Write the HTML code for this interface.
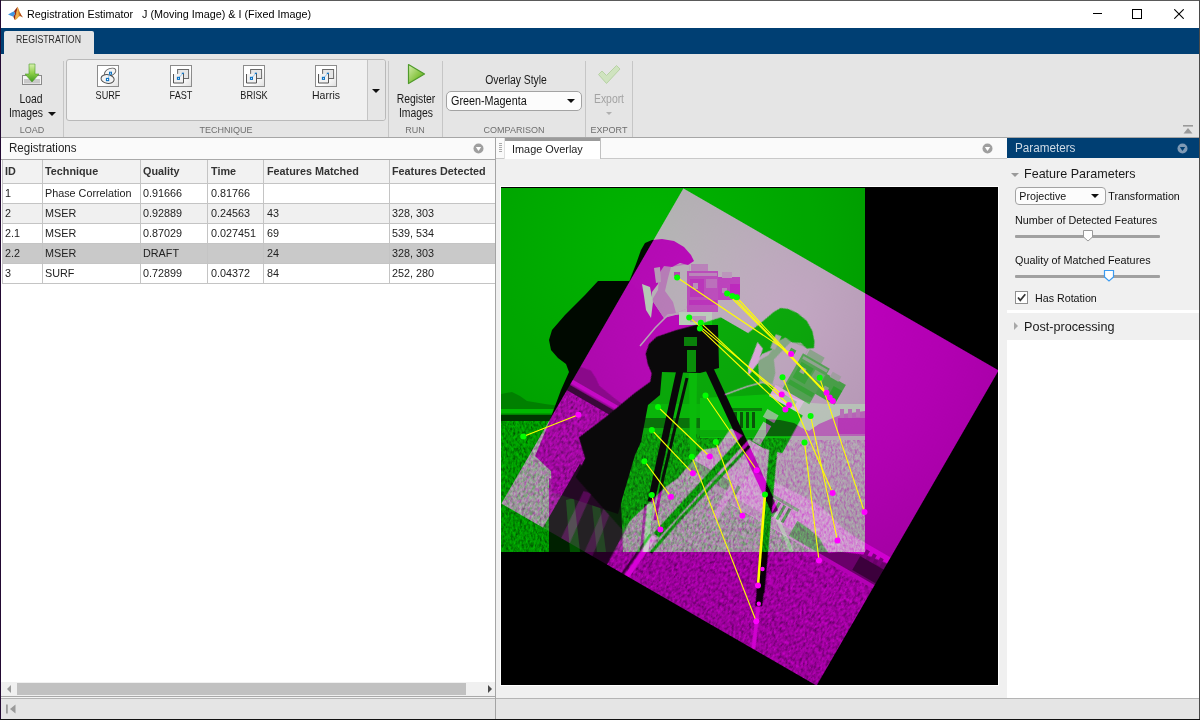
<!DOCTYPE html>
<html>
<head>
<meta charset="utf-8">
<title>Registration Estimator</title>
<style>
*{box-sizing:border-box;margin:0;padding:0}
html,body{width:1200px;height:720px;overflow:hidden;background:#fff}
body{font-family:"Liberation Sans",sans-serif;font-size:11px;color:#1a1a1a;position:relative}
.a{position:absolute}
.t{position:absolute;white-space:nowrap;line-height:1}
.c{transform:translateX(-50%)}
#blue{left:0;top:28px;width:1200px;height:26px;background:#003f73}
#tab{left:4px;top:31px;width:90px;height:24px;background:#e5e5e5;border-radius:2px 2px 0 0}
#strip{left:0;top:54px;width:1200px;height:83px;background:#e5e5e5}
#stripline{left:0;top:137px;width:1200px;height:1px;background:#a6a6a6}
.vsep{position:absolute;top:61px;width:1px;height:76px;background:#c6c6c6}
.sec{position:absolute;top:126px;font-size:9px;color:#6e6e6e;line-height:1;white-space:nowrap;transform:translateX(-50%)}
.lbl{position:absolute;font-size:12px;color:#1a1a1a;line-height:1;white-space:nowrap;transform:translateX(-50%) scaleX(0.865)}
#gal{left:66px;top:59px;width:320px;height:62px;background:#f0f0f0;border:1px solid #b9b9b9;border-radius:3px}
#galbtn{left:367px;top:60px;width:18px;height:60px;background:#e6e6e6;border-left:1px solid #c4c4c4;border-radius:0 3px 3px 0}
.ibox{position:absolute;top:65px;width:22px;height:22px;background:linear-gradient(135deg,#ffffff 55%,#e4e4e4);border:1px solid #a2a2a2}
.gl{position:absolute;top:90px;font-size:10.5px;color:#1a1a1a;line-height:1;white-space:nowrap;transform:translateX(-50%) scaleX(0.87)}
#dd{left:446px;top:91px;width:136px;height:20px;background:#fcfcfc;border:1px solid #a3a3a3;border-radius:5px}
.tri{position:absolute;width:0;height:0;border-left:4px solid transparent;border-right:4px solid transparent;border-top:4px solid #111}
.hline{position:absolute;height:1px;background:#c4c4c4}
.vline{position:absolute;width:1px;background:#c4c4c4}
.cell{position:absolute;font-size:10.8px;line-height:1;white-space:nowrap;color:#222}
.hd{font-weight:bold;color:#333;font-size:10.8px}
</style>
</head>
<body>
<!-- title bar -->
<div class="a" style="left:0;top:0;width:1200px;height:28px;background:#fff"></div>
<svg class="a" style="left:6px;top:4px" width="20" height="18" viewBox="6 4 20 18">
<path d="M8 14.6 L11.5 12.6 L14 11.3 L15.2 13.5 L13.4 16.8 L11 15.8 Z" fill="#3f95e0"/>
<path d="M14 11.3 L16.2 8.6 L17.6 6.8 L17 11 L15.8 15 L14.6 20 L13.4 16.8 L15.2 13.5 Z" fill="#8a2818"/>
<path d="M17.6 6.8 C18.6 8.6 19.8 13.2 23 17.6 C21.6 16.4 20.3 15.8 19 16.6 C17.6 17.8 16.4 20 14.6 20 C15.2 17 16.4 12 17.6 6.8 Z" fill="#d4862e"/>
<path d="M17.6 7.6 C18.2 10 18.4 13.5 19 16.6 C17.8 17.6 16.6 19.4 15.2 19.8 C16 16 16.8 12 17.6 7.6 Z" fill="#efb04a"/>
<path d="M19.6 12.2 C20.4 14.2 21.6 16 23 17.6 C21.8 16.6 20.8 16 19.8 16.1 Z" fill="#a8451c"/>
</svg>
<div class="t" id="title" style="left:26.6px;top:8px;font-size:11.6px;color:#000;transform-origin:0 50%;transform:scaleX(0.93)">Registration Estimator &nbsp; J (Moving Image) &amp; I (Fixed Image)</div>
<!-- window buttons -->
<div class="a" style="left:1093px;top:13px;width:9px;height:1px;background:#000"></div>
<div class="a" style="left:1132px;top:9px;width:10px;height:10px;border:1px solid #000"></div>
<svg class="a" style="left:1174px;top:9px" width="10" height="10" viewBox="0 0 10 10"><path d="M0.3 0.3 L9.7 9.7 M9.7 0.3 L0.3 9.7" stroke="#000" stroke-width="1.1" fill="none"/></svg>

<div id="blue" class="a"></div>
<div id="tab" class="a"></div>
<div class="t" id="tabtxt" style="left:16.3px;top:35.3px;font-size:10px;color:#2a2a2a;transform-origin:0 50%;transform:scaleX(0.875)">REGISTRATION</div>
<div id="strip" class="a"></div>
<div id="stripline" class="a"></div>

<!-- TOOLSTRIP -->
<div id="toolstrip">
<div class="vsep" style="left:63px"></div>
<div class="vsep" style="left:388px"></div>
<div class="vsep" style="left:442px"></div>
<div class="vsep" style="left:585px"></div>
<div class="vsep" style="left:632px"></div>
<!-- load -->
<svg class="a" style="left:20px;top:62px" width="24" height="24" viewBox="0 0 24 24">
<defs><linearGradient id="ga" x1="0" y1="0" x2="0" y2="1"><stop offset="0" stop-color="#d9f0b0"/><stop offset="0.5" stop-color="#8fd04a"/><stop offset="1" stop-color="#3e9a1e"/></linearGradient></defs>
<rect x="2.5" y="13.5" width="19" height="9" fill="#f4f4f4" stroke="#8a8a8a"/>
<rect x="4" y="17" width="16" height="4.5" fill="#c9c9c9"/>
<path d="M9 2 L15 2 L15 12 L19 12 L12 20 L5 12 L9 12 Z" fill="url(#ga)" stroke="#4b9a2a" stroke-width="0.6"/>
</svg>
<div class="lbl" style="left:31px;top:93px">Load</div>
<div class="lbl" style="left:26px;top:106.5px">Images</div>
<div class="tri" style="left:48px;top:112px"></div>
<div class="sec" style="left:32px">LOAD</div>
<!-- gallery -->
<div id="gal" class="a"></div>
<div id="galbtn" class="a"></div>
<div class="tri" style="left:372px;top:89px"></div>
<svg class="a" style="left:97px;top:65px" width="22" height="22" viewBox="0 0 22 22"><defs><linearGradient id="ib" x1="0" y1="0" x2="1" y2="1"><stop offset="0.6" stop-color="#fff"/><stop offset="1" stop-color="#dedede"/></linearGradient></defs>
<rect x="0.5" y="0.5" width="21" height="21" fill="url(#ib)" stroke="#8c8c8c"/>
<ellipse cx="13.2" cy="7.2" rx="6" ry="3.6" transform="rotate(-24 13.2 7.2)" fill="#f4f4f4" stroke="#5a5a5a" stroke-width="0.9"/>
<ellipse cx="10.6" cy="14" rx="6.6" ry="4.4" transform="rotate(8 10.6 14)" fill="#f4f4f4" stroke="#505050" stroke-width="1"/>
<path d="M13.4 8.1 L10.5 14.5" stroke="#7fb6e6" stroke-width="0.8"/>
<rect x="12" y="6.7" width="3" height="3" fill="#0b72c4"/><rect x="13.1" y="7.8" width="0.9" height="0.9" fill="#fff"/>
<rect x="8.9" y="12.9" width="3.3" height="3.3" fill="#0b72c4"/><rect x="10" y="14" width="1.1" height="1.1" fill="#fff"/>
</svg>
<svg class="a" style="left:170px;top:65px" width="22" height="22" viewBox="0 0 22 22">
<rect x="0.5" y="0.5" width="21" height="21" fill="url(#ib)" stroke="#8c8c8c"/>
<rect x="7.6" y="4.5" width="11" height="9" fill="#e6e6e6" stroke="#6a6a6a"/>
<path d="M3.5 9 L3.5 18 L13.5 18 L13.5 8.7" fill="#f2f2f2" stroke="#555" stroke-width="1"/>
<path d="M8.4 13.3 L12.9 8.3" stroke="#8cc0ea" stroke-width="0.9"/>
<rect x="6.9" y="11.8" width="3.1" height="3.1" fill="#0b72c4"/><rect x="8" y="12.9" width="0.9" height="0.9" fill="#fff"/>
<rect x="11.8" y="7.7" width="2.2" height="1.2" fill="#0b72c4"/>
</svg>
<svg class="a" style="left:243px;top:65px" width="22" height="22" viewBox="0 0 22 22">
<rect x="0.5" y="0.5" width="21" height="21" fill="url(#ib)" stroke="#8c8c8c"/>
<rect x="7.6" y="4.5" width="11" height="9" fill="#e6e6e6" stroke="#6a6a6a"/>
<path d="M3.5 9 L3.5 18 L13.5 18 L13.5 8.7" fill="#f2f2f2" stroke="#555" stroke-width="1"/>
<path d="M8.4 13.3 L12.9 8.3" stroke="#8cc0ea" stroke-width="0.9"/>
<rect x="6.9" y="11.8" width="3.1" height="3.1" fill="#0b72c4"/><rect x="8" y="12.9" width="0.9" height="0.9" fill="#fff"/>
<rect x="11.8" y="7.7" width="2.2" height="1.2" fill="#0b72c4"/>
</svg>
<svg class="a" style="left:315px;top:65px" width="22" height="22" viewBox="0 0 22 22">
<rect x="0.5" y="0.5" width="21" height="21" fill="url(#ib)" stroke="#8c8c8c"/>
<rect x="7.6" y="4.5" width="11" height="9" fill="#e6e6e6" stroke="#6a6a6a"/>
<path d="M3.5 9 L3.5 18 L13.5 18 L13.5 8.7" fill="#f2f2f2" stroke="#555" stroke-width="1"/>
<path d="M8.4 13.3 L12.9 8.3" stroke="#8cc0ea" stroke-width="0.9"/>
<rect x="6.9" y="11.8" width="3.1" height="3.1" fill="#0b72c4"/><rect x="8" y="12.9" width="0.9" height="0.9" fill="#fff"/>
<rect x="11.8" y="7.7" width="2.2" height="1.2" fill="#0b72c4"/>
</svg>
<div class="gl" style="left:108px">SURF</div>
<div class="gl" style="left:181px">FAST</div>
<div class="gl" style="left:254px">BRISK</div>
<div class="gl" style="left:326px;transform:translateX(-50%)">Harris</div>
<div class="sec" style="left:226px">TECHNIQUE</div>
<!-- run -->
<svg class="a" style="left:406px;top:62px" width="22" height="24" viewBox="0 0 22 24">
<defs><linearGradient id="gp" x1="0" y1="0" x2="1" y2="1"><stop offset="0" stop-color="#d6efb0"/><stop offset="0.6" stop-color="#86c440"/><stop offset="1" stop-color="#4f9a22"/></linearGradient></defs>
<path d="M2.5 2.5 L18.5 12 L2.5 21.5 Z" fill="url(#gp)" stroke="#4f9a2a" stroke-width="1.2" stroke-linejoin="round"/>
</svg>
<div class="lbl" style="left:416px;top:93px">Register</div>
<div class="lbl" style="left:416px;top:106.5px">Images</div>
<div class="sec" style="left:415px">RUN</div>
<!-- comparison -->
<div class="lbl" style="left:515.5px;top:74px">Overlay Style</div>
<div id="dd" class="a"></div>
<div class="t" id="gm" style="left:451px;top:95px;font-size:12px;color:#111;transform-origin:0 50%;transform:scaleX(0.9)">Green-Magenta</div>
<div class="tri" style="left:567px;top:99px"></div>
<div class="sec" style="left:514px">COMPARISON</div>
<!-- export -->
<svg class="a" style="left:596px;top:63px" width="26" height="24" viewBox="0 0 26 24">
<path d="M2.5 11.5 L6 8 L10.5 12.5 L20.5 2.5 L24 6 L10.5 20.5 Z" fill="#cfe3bf" stroke="#b7d2a4" stroke-width="1"/>
</svg>
<div class="lbl" style="left:609px;top:93px;color:#a3a3a3">Export</div>
<div class="tri" style="left:606px;top:112px;border-top-color:#b0b0b0;border-left-width:3px;border-right-width:3px;border-top-width:3px"></div>
<div class="sec" style="left:609px">EXPORT</div>
<!-- collapse icon -->
<svg class="a" style="left:1182px;top:124px" width="12" height="11" viewBox="0 0 12 11"><rect x="1" y="1" width="10" height="1.6" fill="#9a9a9a"/><path d="M6 4 L10.5 9.5 L1.5 9.5 Z" fill="#9a9a9a"/></svg>
</div>

<!-- PANELS placeholder -->
<div id="panels">
<!-- Registrations panel -->
<div class="a" style="left:1px;top:138px;width:494px;height:21px;background:#fafafa"></div>
<div class="t" id="regt" style="left:8.5px;top:142.4px;font-size:12px;color:#222;transform-origin:0 50%;transform:scaleX(0.965)">Registrations</div>
<svg class="a" style="left:473px;top:143px" width="11" height="11" viewBox="0 0 11 11"><circle cx="5.5" cy="5.5" r="5" fill="#9f9f9f"/><path d="M2.8 4 L8.2 4 L5.5 8 Z" fill="#fff"/></svg>
<div class="a" style="left:1px;top:159px;width:495px;height:1px;background:#a9a9a9"></div>
<div class="a" style="left:1px;top:160px;width:494px;height:522px;background:#fff"></div>
<!-- table -->
<div class="a" style="left:2px;top:160px;width:493px;height:23px;background:#f2f2f2"></div>
<div class="a" style="left:2px;top:204px;width:493px;height:19px;background:#f0f0f0"></div>
<div class="a" style="left:2px;top:244px;width:493px;height:19px;background:#c9c9c9"></div>
<div class="hline" style="left:2px;top:183px;width:493px"></div>
<div class="hline" style="left:2px;top:203px;width:493px"></div>
<div class="hline" style="left:2px;top:223px;width:493px"></div>
<div class="hline" style="left:2px;top:243px;width:493px"></div>
<div class="hline" style="left:2px;top:263px;width:493px"></div>
<div class="hline" style="left:2px;top:283px;width:493px"></div>
<div class="vline" style="left:2px;top:160px;height:124px"></div>
<div class="vline" style="left:42px;top:160px;height:124px"></div>
<div class="vline" style="left:140px;top:160px;height:124px"></div>
<div class="vline" style="left:207px;top:160px;height:124px"></div>
<div class="vline" style="left:263px;top:160px;height:124px"></div>
<div class="vline" style="left:389px;top:160px;height:124px"></div>
<div class="cell hd" style="left:5px;top:166px">ID</div>
<div class="cell hd" style="left:45px;top:166px">Technique</div>
<div class="cell hd" style="left:143px;top:166px">Quality</div>
<div class="cell hd" style="left:211px;top:166px">Time</div>
<div class="cell hd" style="left:267px;top:166px">Features Matched</div>
<div class="cell hd" style="left:392px;top:166px">Features Detected</div>
<div class="cell" style="left:5px;top:188px">1</div>
<div class="cell" style="left:45px;top:188px">Phase Correlation</div>
<div class="cell" style="left:143px;top:188px">0.91666</div>
<div class="cell" style="left:211px;top:188px">0.81766</div>
<div class="cell" style="left:5px;top:208px">2</div>
<div class="cell" style="left:45px;top:208px">MSER</div>
<div class="cell" style="left:143px;top:208px">0.92889</div>
<div class="cell" style="left:211px;top:208px">0.24563</div>
<div class="cell" style="left:267px;top:208px">43</div>
<div class="cell" style="left:392px;top:208px">328, 303</div>
<div class="cell" style="left:5px;top:228px">2.1</div>
<div class="cell" style="left:45px;top:228px">MSER</div>
<div class="cell" style="left:143px;top:228px">0.87029</div>
<div class="cell" style="left:211px;top:228px">0.027451</div>
<div class="cell" style="left:267px;top:228px">69</div>
<div class="cell" style="left:392px;top:228px">539, 534</div>
<div class="cell" style="left:5px;top:248px">2.2</div>
<div class="cell" style="left:45px;top:248px">MSER</div>
<div class="cell" style="left:143px;top:248px">DRAFT</div>
<div class="cell" style="left:267px;top:248px">24</div>
<div class="cell" style="left:392px;top:248px">328, 303</div>
<div class="cell" style="left:5px;top:268px">3</div>
<div class="cell" style="left:45px;top:268px">SURF</div>
<div class="cell" style="left:143px;top:268px">0.72899</div>
<div class="cell" style="left:211px;top:268px">0.04372</div>
<div class="cell" style="left:267px;top:268px">84</div>
<div class="cell" style="left:392px;top:268px">252, 280</div>
<!-- hscroll -->
<div class="a" style="left:1px;top:682px;width:494px;height:14px;background:#f0f0f0"></div>
<div class="a" style="left:17px;top:683px;width:449px;height:12px;background:#c1c1c1"></div>
<div class="a" style="left:7px;top:685px;width:0;height:0;border-top:4px solid transparent;border-bottom:4px solid transparent;border-right:4px solid #9a9a9a"></div>
<div class="a" style="left:488px;top:685px;width:0;height:0;border-top:4px solid transparent;border-bottom:4px solid transparent;border-left:4px solid #4a4a4a"></div>
<!-- vertical divider -->
<div class="a" style="left:495px;top:138px;width:1px;height:582px;background:#a4a4a4"></div>
<!-- Image overlay panel -->
<div class="a" style="left:496px;top:138px;width:511px;height:21px;background:#fafafa"></div>
<div class="a" style="left:496px;top:159px;width:511px;height:539px;background:#f0f0f0"></div>
<div class="a" style="left:496px;top:158px;width:511px;height:1px;background:#c9c9c9"></div>
<div class="a" style="left:499px;top:143px;width:3px;height:10px;background:repeating-linear-gradient(#aaa 0 1px,#fafafa 1px 2px)"></div>
<div class="a" style="left:504px;top:138px;width:97px;height:21px;background:#fff;border-right:1px solid #c0c0c0;border-left:1px solid #e0e0e0"></div>
<div class="a" style="left:505px;top:138px;width:95px;height:3px;background:#9b9b9b"></div>
<div class="t" id="iot" style="left:512px;top:144px;font-size:10.9px;color:#222">Image Overlay</div>
<svg class="a" style="left:982px;top:143px" width="11" height="11" viewBox="0 0 11 11"><circle cx="5.5" cy="5.5" r="5" fill="#9f9f9f"/><path d="M2.8 4 L8.2 4 L5.5 8 Z" fill="#fff"/></svg>
<!-- image axes -->
<div id="axes" class="a" style="left:500px;top:186px;width:499px;height:500px;background:#fff"></div>
<div id="img" class="a" style="left:501px;top:187px;width:497px;height:498px;background:#000;overflow:hidden"></div>
<!--OVSTART-->
<svg id="ov" class="a" style="left:501px;top:187px" width="497" height="498" viewBox="501 187 497 498">
<defs>
<radialGradient id="sky" gradientUnits="userSpaceOnUse" cx="651" cy="248" r="330"><stop offset="0" stop-color="#c3c3c3"/><stop offset="0.5" stop-color="#b2b2b2"/><stop offset="1" stop-color="#9c9c9c"/></radialGradient>
<linearGradient id="grass" gradientUnits="userSpaceOnUse" x1="0" y1="420" x2="0" y2="552"><stop offset="0" stop-color="#ababab"/><stop offset="1" stop-color="#a0a0a0"/></linearGradient>
<filter id="nz" x="0" y="0" width="100%" height="100%" color-interpolation-filters="sRGB"><feTurbulence type="fractalNoise" baseFrequency="0.45 0.25" numOctaves="2" seed="7" result="t"/><feColorMatrix in="t" type="matrix" values="0 0 0 0 0  0 0 0 0 0  0 0 0 0 0  1.1 0 0 0 -0.45"/></filter>
<filter id="nw" x="0" y="0" width="100%" height="100%" color-interpolation-filters="sRGB"><feTurbulence type="fractalNoise" baseFrequency="0.5 0.28" numOctaves="2" seed="23" result="t"/><feColorMatrix in="t" type="matrix" values="0 0 0 0 1  0 0 0 0 1  0 0 0 0 1  0 1.1 0 0 -0.47"/></filter>
<clipPath id="sq"><rect x="501" y="188" width="364" height="364"/></clipPath>
<filter id="fg" x="0" y="0" width="100%" height="100%" color-interpolation-filters="sRGB"><feColorMatrix type="matrix" values="0 0 0 0 0  0 0.93 0 0 0  0 0 0 0 0  0 0 0 1 0"/></filter>
<filter id="fm" x="0" y="0" width="100%" height="100%" color-interpolation-filters="sRGB"><feColorMatrix type="matrix" values="1 0 0 0 0  0 0 0 0 0  0 0 1 0 0  0 0 0 1 0"/></filter>
<g id="cam" clip-path="url(#sq)">
<!-- sky -->
<rect x="501" y="188" width="364" height="364" fill="url(#sky)"/>
<!-- grass -->
<rect x="501" y="420" width="364" height="132" fill="url(#grass)"/>
<rect x="501" y="420" width="364" height="132" filter="url(#nz)"/>
<rect x="501" y="420" width="364" height="132" filter="url(#nw)"/>
<!-- left horizon -->
<path d="M501 394 L512 392 L520 396 L527 401 L545 404 L560 406 L560 421 L501 421 Z" fill="#8a8a8a"/>
<rect x="501" y="409" width="62" height="4.5" fill="#c6c6c6"/>
<rect x="501" y="415" width="62" height="6" fill="#3a3a3a"/>
<!-- right horizon / buildings -->
<rect x="640" y="404" width="62" height="14" fill="#c4c4c4"/>
<rect x="640" y="418" width="62" height="10" fill="#7a7a7a"/>
<rect x="640" y="428" width="62" height="6" fill="#b0b0b0"/>
<path d="M700 398 L740 396 L772 394 L790 397 L800 400 L812 403 L826 404 L865 404 L865 438 L700 438 Z" fill="#d0d0d0"/>
<rect x="700" y="430" width="92" height="7" fill="#b8b8b8"/>
<path d="M734 412 h3 v16 h-3z M740 412 h3 v16 h-3z M746 412 h3 v16 h-3z M752 412 h3 v16 h-3z" fill="#5a5a5a"/>
<rect x="728" y="408" width="34" height="3" fill="#8a8a8a"/>
<path d="M766 419 L780 420 L794 423 L802 428 L809 431 L819 424 L833 418 L843 414 L865 411 L865 436 L766 436 Z" fill="#6a6a6a"/>
<path d="M840 409 h4 v10 h-4z M848 409 h4 v9 h-4z M856 409 h4 v8 h-4z" fill="#7a7a7a"/>
<rect x="838" y="418" width="27" height="16" fill="#3c3c3c"/>
<rect x="790" y="436" width="75" height="4" fill="#b4b4b4"/>
<!-- tripod -->
<path d="M689 372 L697 372 L696 458 L690 458 Z" fill="#c8c8c8"/>
<path d="M680 370 L651 502" stroke="#080808" stroke-width="7" fill="none"/>
<path d="M650 504 L646 552" stroke="#d8d8d8" stroke-width="5" fill="none"/>
<path d="M645.5 504 L641 552" stroke="#3a3a3a" stroke-width="2.5" fill="none"/>
<path d="M687 378 L663 478 L655 520" stroke="#101010" stroke-width="3" fill="none"/>
<path d="M708 366 L770 500" stroke="#080808" stroke-width="8" fill="none"/>
<path d="M769 498 L775 512" stroke="#0c0c0c" stroke-width="7" fill="none"/>
<path d="M775 513 L792 552" stroke="#d0d0d0" stroke-width="4" fill="none"/>
<!-- legs -->
<path d="M549 478 L600 495 L621 500 L623 552 L549 552 Z" fill="#242424"/>
<path d="M566 500 L574 498 L580 552 L570 552 Z" fill="#555"/>
<path d="M592 505 L600 506 L606 552 L597 552 Z" fill="#4a4a4a"/>
<!-- coat -->
<path d="M598 281 L630 281 L652 300 L664 318 L679 314 L679 325 L718 325 L719 368 L700 373 L662 372 L660 395 L648 405 L641 442 L635 455 L623 496 L618 514 L552 492 L551 471 L535 456 L548 425 L561 390 L569 372 L566 364 L558 358 L551 350 L549 340 L552 330 L565 315 L585 295 Z" fill="#0a0a0a"/>
<!-- pan head highlights -->
<rect x="684" y="337" width="13" height="9" fill="#8a8a8a"/>
<rect x="687" y="350" width="9" height="22" fill="#9a9a9a"/>
<!-- head -->
<path d="M660 266 L672 266 L689 262 L690 276 L693 285 L689 290 L689 298 L686 309 L676 313 L664 318 L652 300 L658 290 Z" fill="#858585"/>
<path d="M671 267 L689 264 L690 276 L693 285 L689 290 L689 298 L686 309 L676 313 L673 302 L665 291 L668 278 Z" fill="#bcbcbc"/>
<path d="M629 282 L636 264 L641 250 L645 243 L652 240 L662 239 L674 241 L684 247 L691 255 L694 261 L688 265 L680 263 L672 267 L664 266 L660 272 L658 284 L652 292 L652 300 Z" fill="#0c0c0c"/>
<path d="M654 268 L660 267 L661 282 L656 283 Z" fill="#a8a8a8"/>
<rect x="674" y="272" width="6" height="4" fill="#4a4a4a"/>
<path d="M642 284 L650 287 L653 302 L651 318 L646 310 L644 296 Z" fill="#d8d8d8"/>
<path d="M640 346 L655 328 L668 315 L687 313" stroke="#b0b0b0" stroke-width="1.5" fill="none"/>
<!-- camera -->
<rect x="687" y="271" width="31" height="41" fill="#545454"/>
<rect x="691" y="264" width="17" height="7" fill="#8c8c8c"/>
<rect x="689" y="273" width="28" height="3" fill="#909090"/>
<rect x="690" y="279" width="14" height="18" fill="#3a3a3a"/>
<rect x="706" y="279" width="11" height="9" fill="#7a7a7a"/>
<rect x="693" y="283" width="5" height="6" fill="#9a9a9a"/>
<rect x="689" y="300" width="28" height="5" fill="#383838"/>
<rect x="718" y="277" width="22" height="23" fill="#484848"/>
<rect x="722" y="272" width="10" height="6" fill="#a0a0a0"/>
<rect x="730" y="284" width="10" height="12" fill="#2c2c2c"/>
<rect x="722" y="288" width="5" height="5" fill="#8a8a8a"/>
<rect x="679" y="312" width="33" height="13" fill="#dadada"/>
<rect x="690" y="316" width="16" height="6" fill="#a0a0a0"/>
</g>
</defs>
<rect x="501" y="187" width="497" height="498" fill="#000"/>
<g filter="url(#fg)"><use href="#cam"/></g>
<g style="mix-blend-mode:screen"><g filter="url(#fm)" transform="translate(750 437) rotate(30) translate(-683 -370)"><use href="#cam"/></g></g>
<g id="matches">
<path d="M677.1 277.5 L791.1 353.9" stroke="#ffff00" stroke-width="1.1" fill="none"/>
<path d="M727.1 293.4 L826.5 392.7" stroke="#ffff00" stroke-width="1.1" fill="none"/>
<path d="M732.3 296.0 L829.7 397.6" stroke="#ffff00" stroke-width="1.1" fill="none"/>
<path d="M736.8 297.3 L832.9 400.9" stroke="#ffff00" stroke-width="1.1" fill="none"/>
<path d="M689.2 317.4 L781.7 394.5" stroke="#ffff00" stroke-width="1.1" fill="none"/>
<path d="M700.8 322.8 L789.0 405.0" stroke="#ffff00" stroke-width="1.1" fill="none"/>
<path d="M699.9 328.4 L785.4 409.4" stroke="#ffff00" stroke-width="1.1" fill="none"/>
<path d="M782.5 377.2 L832.6 493.0" stroke="#ffff00" stroke-width="1.1" fill="none"/>
<path d="M819.7 377.8 L864.5 512.1" stroke="#ffff00" stroke-width="1.1" fill="none"/>
<path d="M810.6 416.0 L837.5 540.6" stroke="#ffff00" stroke-width="1.1" fill="none"/>
<path d="M804.5 442.5 L819.0 560.5" stroke="#ffff00" stroke-width="1.1" fill="none"/>
<path d="M523.3 436.5 L578.4 414.7" stroke="#ffff00" stroke-width="1.1" fill="none"/>
<path d="M658.0 407.0 L709.8 456.5" stroke="#ffff00" stroke-width="1.1" fill="none"/>
<path d="M651.8 430.0 L692.9 473.3" stroke="#ffff00" stroke-width="1.1" fill="none"/>
<path d="M644.5 461.2 L671.0 496.8" stroke="#ffff00" stroke-width="1.1" fill="none"/>
<path d="M651.8 495.0 L660.4 529.6" stroke="#ffff00" stroke-width="1.1" fill="none"/>
<path d="M705.5 395.5 L756.7 470.3" stroke="#ffff00" stroke-width="1.1" fill="none"/>
<path d="M715.8 442.0 L742.4 515.7" stroke="#ffff00" stroke-width="1.1" fill="none"/>
<path d="M691.8 456.8 L756.2 621.2" stroke="#ffff00" stroke-width="1.1" fill="none"/>
<path d="M765.0 494.5 L758.0 585.5" stroke="#ffff00" stroke-width="2.6" fill="none"/>
<circle cx="677.1" cy="277.5" r="3" fill="#00ff00"/>
<circle cx="791.1" cy="353.9" r="3" fill="#ff00ff"/>
<circle cx="727.1" cy="293.4" r="3" fill="#00ff00"/>
<circle cx="826.5" cy="392.7" r="3" fill="#ff00ff"/>
<circle cx="732.3" cy="296.0" r="3" fill="#00ff00"/>
<circle cx="829.7" cy="397.6" r="3" fill="#ff00ff"/>
<circle cx="736.8" cy="297.3" r="3" fill="#00ff00"/>
<circle cx="832.9" cy="400.9" r="3" fill="#ff00ff"/>
<circle cx="689.2" cy="317.4" r="3" fill="#00ff00"/>
<circle cx="781.7" cy="394.5" r="3" fill="#ff00ff"/>
<circle cx="700.8" cy="322.8" r="3" fill="#00ff00"/>
<circle cx="789.0" cy="405.0" r="3" fill="#ff00ff"/>
<circle cx="699.9" cy="328.4" r="3" fill="#00ff00"/>
<circle cx="785.4" cy="409.4" r="3" fill="#ff00ff"/>
<circle cx="782.5" cy="377.2" r="3" fill="#00ff00"/>
<circle cx="832.6" cy="493.0" r="3" fill="#ff00ff"/>
<circle cx="819.7" cy="377.8" r="3" fill="#00ff00"/>
<circle cx="864.5" cy="512.1" r="3" fill="#ff00ff"/>
<circle cx="810.6" cy="416.0" r="3" fill="#00ff00"/>
<circle cx="837.5" cy="540.6" r="3" fill="#ff00ff"/>
<circle cx="804.5" cy="442.5" r="3" fill="#00ff00"/>
<circle cx="819.0" cy="560.5" r="3" fill="#ff00ff"/>
<circle cx="523.3" cy="436.5" r="3" fill="#00ff00"/>
<circle cx="578.4" cy="414.7" r="3" fill="#ff00ff"/>
<circle cx="658.0" cy="407.0" r="3" fill="#00ff00"/>
<circle cx="709.8" cy="456.5" r="3" fill="#ff00ff"/>
<circle cx="651.8" cy="430.0" r="3" fill="#00ff00"/>
<circle cx="692.9" cy="473.3" r="3" fill="#ff00ff"/>
<circle cx="644.5" cy="461.2" r="3" fill="#00ff00"/>
<circle cx="671.0" cy="496.8" r="3" fill="#ff00ff"/>
<circle cx="651.8" cy="495.0" r="3" fill="#00ff00"/>
<circle cx="660.4" cy="529.6" r="3" fill="#ff00ff"/>
<circle cx="705.5" cy="395.5" r="3" fill="#00ff00"/>
<circle cx="756.7" cy="470.3" r="3" fill="#ff00ff"/>
<circle cx="715.8" cy="442.0" r="3" fill="#00ff00"/>
<circle cx="742.4" cy="515.7" r="3" fill="#ff00ff"/>
<circle cx="691.8" cy="456.8" r="3" fill="#00ff00"/>
<circle cx="756.2" cy="621.2" r="3" fill="#ff00ff"/>
<circle cx="765.0" cy="494.5" r="3" fill="#00ff00"/>
<circle cx="758.0" cy="585.5" r="3" fill="#ff00ff"/>
<circle cx="762.5" cy="569.0" r="2.2" fill="#ff00ff"/>
<circle cx="758.8" cy="603.8" r="2.2" fill="#ff00ff"/>
</g>
</svg>

<!--OVEND-->
<!-- Parameters panel -->
<div class="a" style="left:1007px;top:138px;width:192px;height:20px;background:#003f73"></div>
<div class="t" id="part" style="left:1015.3px;top:142.4px;font-size:12px;color:#cfdbe6;transform-origin:0 50%;transform:scaleX(0.975)">Parameters</div>
<svg class="a" style="left:1177px;top:143px" width="11" height="11" viewBox="0 0 11 11"><circle cx="5.5" cy="5.5" r="5" fill="#7f9ab5"/><path d="M2.8 4 L8.2 4 L5.5 8 Z" fill="#003f73"/></svg>
<div class="a" style="left:1007px;top:158px;width:192px;height:152px;background:#f0f0f0"></div>
<div class="a" style="left:1007px;top:310px;width:192px;height:3px;background:#fff"></div>
<div class="a" style="left:1007px;top:313px;width:192px;height:27px;background:#f0f0f0"></div>
<div class="a" style="left:1007px;top:340px;width:192px;height:358px;background:#fff"></div>
<div class="a" style="left:1011px;top:173px;width:0;height:0;border-left:4px solid transparent;border-right:4px solid transparent;border-top:4px solid #9a9a9a"></div>
<div class="t" id="fpt" style="left:1024.3px;top:166.7px;font-size:13px;color:#1a1a1a;transform-origin:0 50%;transform:scaleX(0.965)">Feature Parameters</div>
<div class="a" style="left:1015px;top:187px;width:91px;height:18px;background:#fcfcfc;border:1px solid #a3a3a3;border-radius:4px"></div>
<div class="t" id="prj" style="left:1019.3px;top:190.7px;font-size:10.7px;color:#111">Projective</div>
<div class="tri" style="left:1091px;top:194px"></div>
<div class="t" id="trf" style="left:1108.3px;top:190.8px;font-size:10.7px;color:#111">Transformation</div>
<div class="t" id="ndf" style="left:1015px;top:215px;font-size:10.8px;color:#111">Number of Detected Features</div>
<div class="a" style="left:1015px;top:235px;width:145px;height:3px;background:#a0a0a0;border-radius:1px"></div>
<svg class="a" style="left:1082px;top:229px" width="12" height="13" viewBox="0 0 12 13"><path d="M1.5 1.5 L10.5 1.5 L10.5 8 L6 12 L1.5 8 Z" fill="#fff" stroke="#9a9a9a" stroke-width="1"/></svg>
<div class="t" id="qmf" style="left:1015px;top:255px;font-size:10.8px;color:#111">Quality of Matched Features</div>
<div class="a" style="left:1015px;top:275px;width:145px;height:3px;background:#a0a0a0;border-radius:1px"></div>
<svg class="a" style="left:1103px;top:269px" width="12" height="13" viewBox="0 0 12 13"><path d="M1.5 1.5 L10.5 1.5 L10.5 8 L6 12 L1.5 8 Z" fill="#fff" stroke="#3c9bf0" stroke-width="1.2"/></svg>
<div class="a" style="left:1015px;top:291px;width:13px;height:13px;background:#fff;border:1px solid #8f8f8f"></div>
<svg class="a" style="left:1015px;top:291px" width="13" height="13" viewBox="0 0 13 13"><path d="M3 6.5 L5.3 9.3 L10.3 3.2" stroke="#333" stroke-width="1.7" fill="none"/></svg>
<div class="t" id="hrt" style="left:1035px;top:293px;font-size:10.7px;color:#111">Has Rotation</div>
<div class="a" style="left:1014px;top:322px;width:0;height:0;border-top:4.5px solid transparent;border-bottom:4.5px solid transparent;border-left:4.5px solid #a8a8a8"></div>
<div class="t" id="ppt" style="left:1024.3px;top:320.3px;font-size:13px;color:#1a1a1a;transform-origin:0 50%;transform:scaleX(0.97)">Post-processing</div>
<!-- status bar -->
<div class="a" style="left:0;top:696px;width:496px;height:1px;background:#a9a9a9"></div>
<div class="a" style="left:0;top:697px;width:496px;height:1px;background:#f4f4f4"></div>
<div class="a" style="left:496px;top:696px;width:511px;height:2px;background:#f0f0f0"></div>
<div class="a" style="left:1007px;top:696px;width:193px;height:2px;background:#fff"></div>
<div class="a" style="left:0;top:698px;width:1200px;height:1px;background:#b4b4b4"></div>
<svg class="a" style="left:1184px;top:704px" width="12" height="10" viewBox="0 0 12 10"><rect x="9.2" y="0.5" width="1.8" height="9" fill="#9a9a9a"/><path d="M1.5 0.5 L1.5 9.5 L7 5 Z" fill="#9a9a9a"/></svg>
<div class="a" style="left:0;top:699px;width:1200px;height:20px;background:#e5e5e5"></div>
<div class="a" style="left:495px;top:696px;width:1px;height:24px;background:#a4a4a4"></div>
<svg class="a" style="left:5px;top:704px" width="12" height="10" viewBox="0 0 12 10"><rect x="1" y="0.5" width="1.8" height="9" fill="#9a9a9a"/><path d="M10.5 0.5 L10.5 9.5 L5 5 Z" fill="#9a9a9a"/></svg>
</div>

<!-- window border -->
<div class="a" style="left:0;top:0;width:1200px;height:1px;background:#5a5a5a"></div>
<div class="a" style="left:0;top:0;width:1px;height:720px;background:#230a33"></div>
<div class="a" style="left:1199px;top:0;width:1px;height:720px;background:#4a4a4a"></div>
<div class="a" style="left:0;top:719px;width:1200px;height:1px;background:#111"></div>
</body>
</html>
